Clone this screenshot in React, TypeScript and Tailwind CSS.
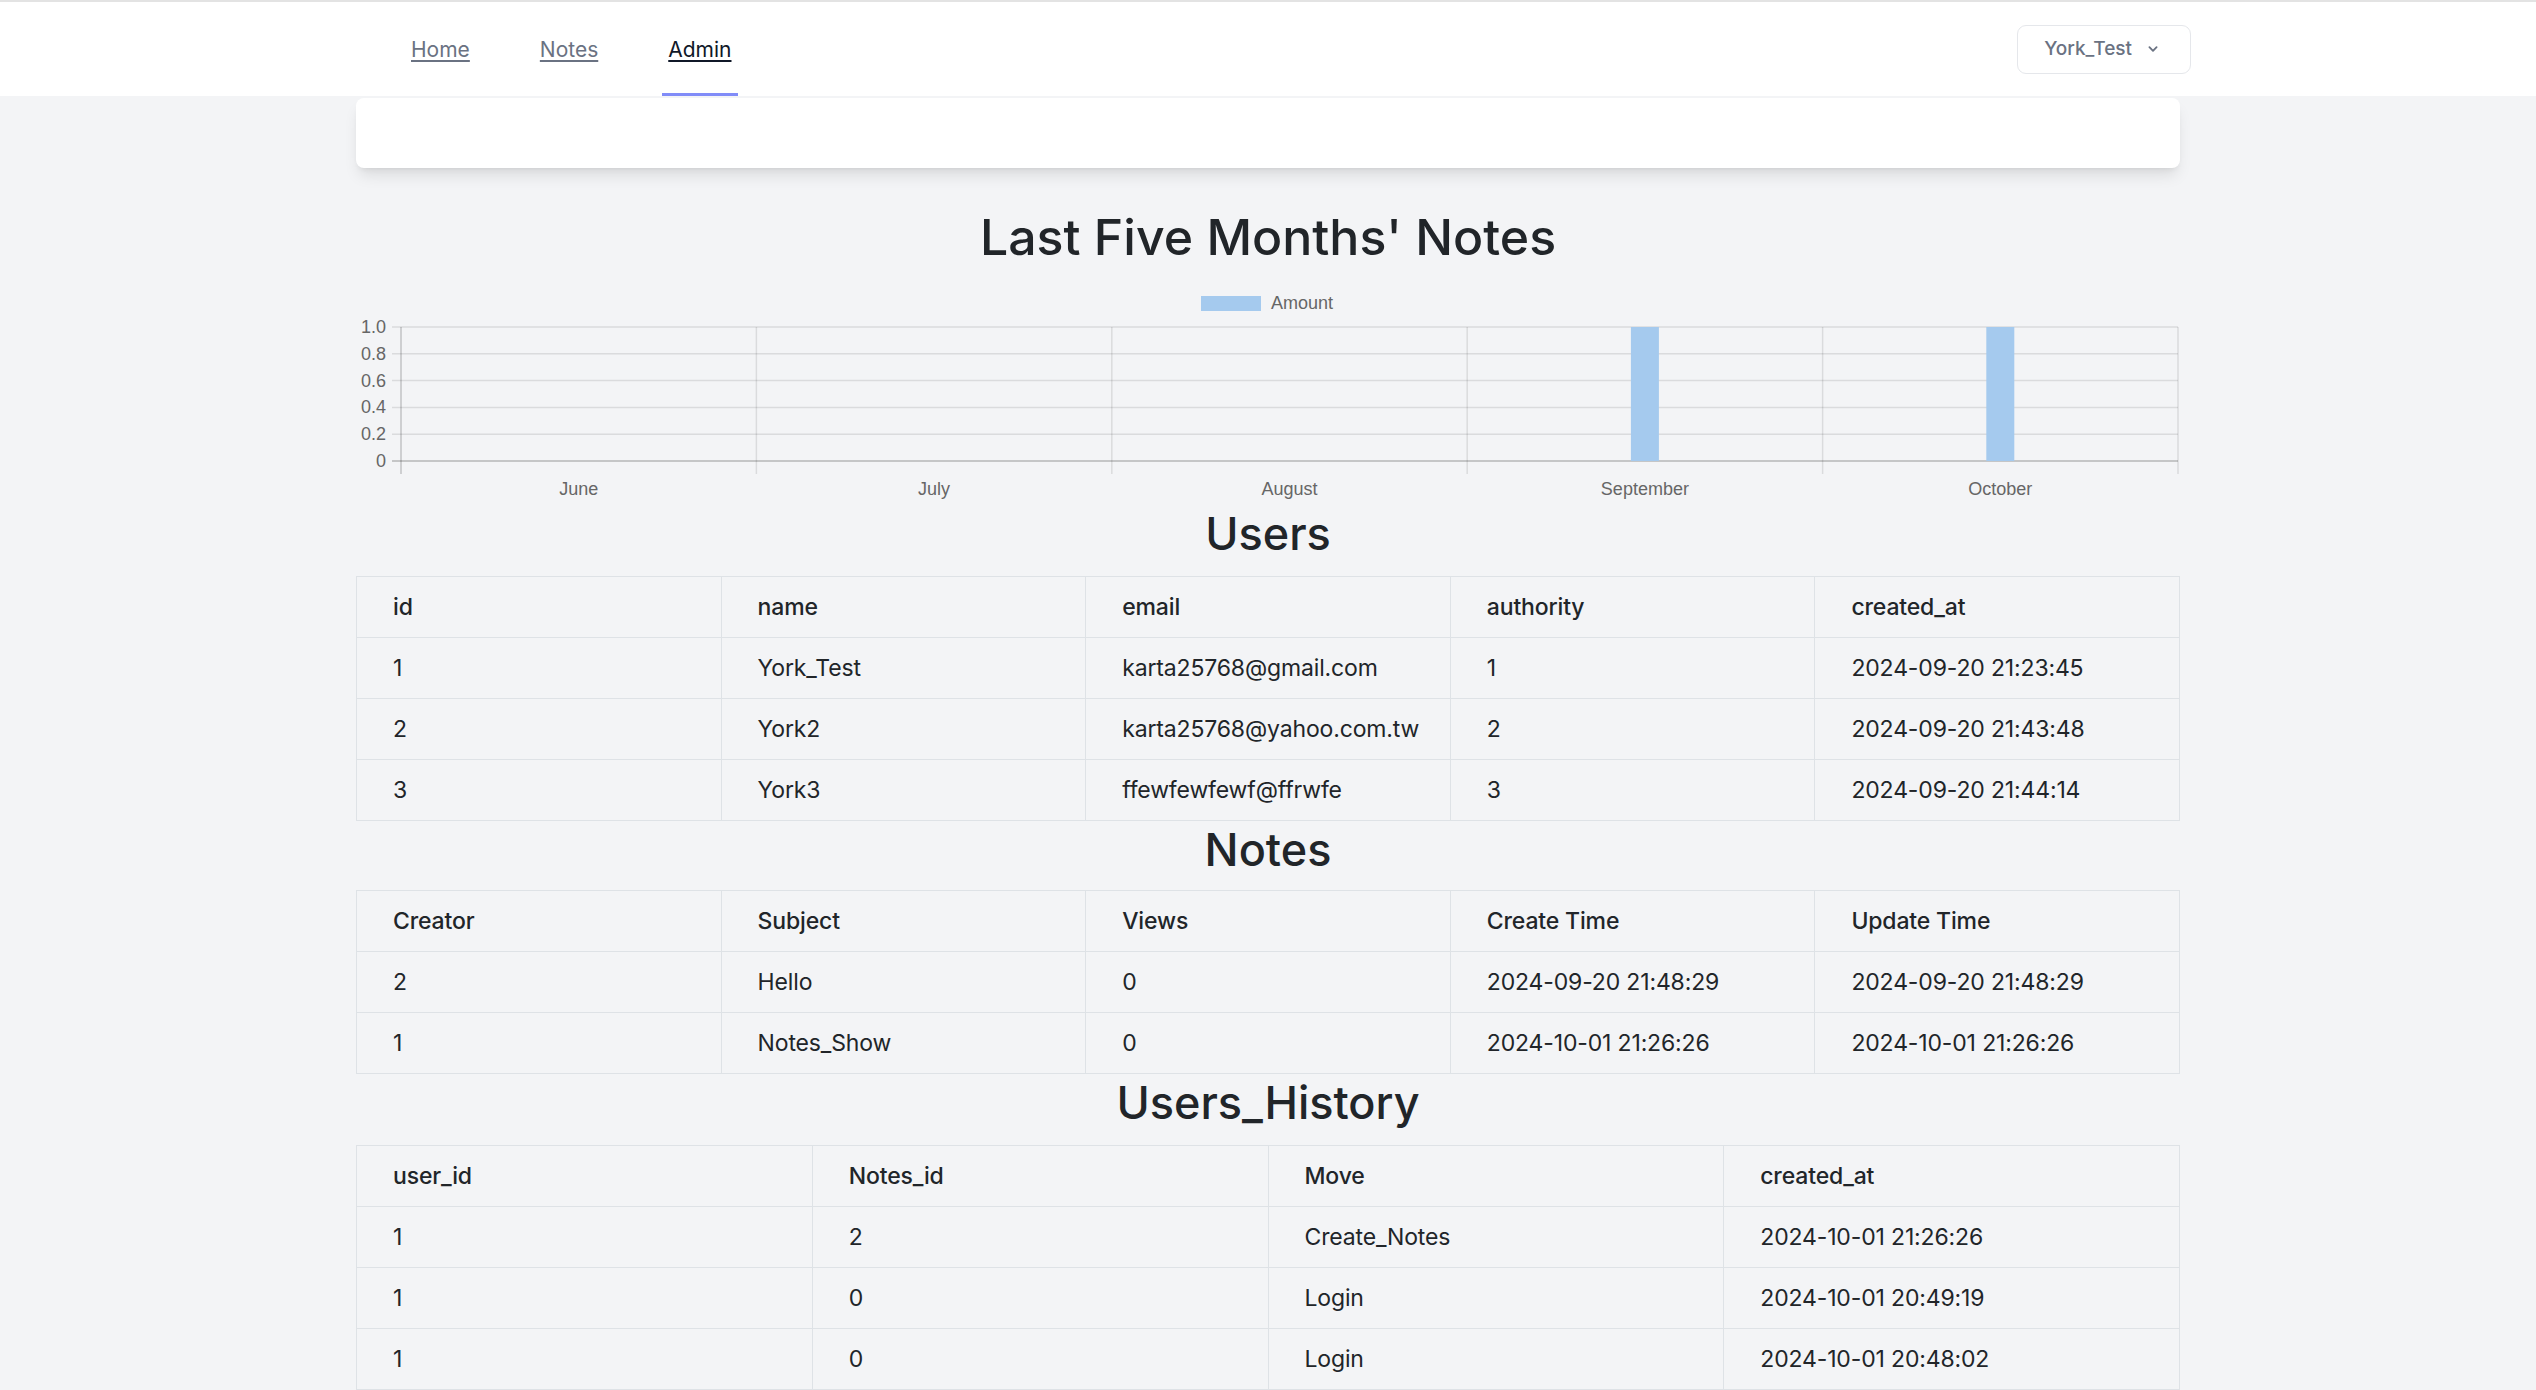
import React from "react";

const FONT = { fontFamily: "Inter, 'Noto Sans', sans-serif" };

const users = [
  ["1", "York_Test", "karta25768@gmail.com", "1", "2024-09-20 21:23:45"],
  ["2", "York2", "karta25768@yahoo.com.tw", "2", "2024-09-20 21:43:48"],
  ["3", "York3", "ffewfewfewf@ffrwfe", "3", "2024-09-20 21:44:14"],
];

const notes = [
  ["2", "Hello", "0", "2024-09-20 21:48:29", "2024-09-20 21:48:29"],
  ["1", "Notes_Show", "0", "2024-10-01 21:26:26", "2024-10-01 21:26:26"],
];

const history = [
  ["1", "2", "Create_Notes", "2024-10-01 21:26:26"],
  ["1", "0", "Login", "2024-10-01 20:49:19"],
  ["1", "0", "Login", "2024-10-01 20:48:02"],
];

function DataTable({ head, rows }: { head: string[]; rows: string[][] }) {
  return (
    <table className="w-full table-fixed border-collapse border border-[#dee2e6] text-[23px] tracking-[-0.15px] text-[#212529]">
      <thead>
        <tr>
          {head.map(h => (
            <th key={h} className="h-[61px] border border-[#dee2e6] px-[36px] text-left font-medium">
              {h}
            </th>
          ))}
        </tr>
      </thead>
      <tbody>
        {rows.map((r, i) => (
          <tr key={i}>
            {r.map((c, j) => (
              <td key={j} className="h-[61px] border border-[#dee2e6] px-[36px] font-normal">
                {c}
              </td>
            ))}
          </tr>
        ))}
      </tbody>
    </table>
  );
}

function Heading({ children }: { children: React.ReactNode }) {
  return <h2 className="text-center text-[45px] leading-[58px] font-medium text-[#212529]">{children}</h2>;
}

function Chart() {
  const left = 45;
  const step = 355.4;
  const months = ["June", "July", "August", "September", "October"];
  const ticks = ["1.0", "0.8", "0.6", "0.4", "0.2", "0"];
  const top = 39;
  const gap = 26.8;
  return (
    <svg width="1824" height="217" className="block" style={{ fontFamily: "'Liberation Sans', Arial, sans-serif" }}>
      <rect x="845" y="8" width="60" height="15" fill="#a5caee" />
      <text x="915" y="21" fontSize="18" fill="#666">Amount</text>
      {ticks.map((t, k) => {
        const y = top + k * gap;
        return (
          <g key={t}>
            <line x1="36" x2="1822" y1={y} y2={y} stroke={k === 5 ? "rgba(0,0,0,0.25)" : "rgba(0,0,0,0.1)"} strokeWidth="1.5" />
            <text x="30" y={y + 6} fontSize="18" fill="#666" textAnchor="end">{t}</text>
          </g>
        );
      })}
      {[0, 1, 2, 3, 4, 5].map(i => (
        <line
          key={i}
          x1={left + i * step}
          x2={left + i * step}
          y1={top}
          y2={186}
          stroke={i === 0 ? "rgba(0,0,0,0.2)" : "rgba(0,0,0,0.1)"}
          strokeWidth="1.5"
        />
      ))}
      <rect x={left + 3.5 * step - 14} y={top} width="28" height={5 * gap} fill="#a5caee" />
      <rect x={left + 4.5 * step - 14} y={top} width="28" height={5 * gap} fill="#a5caee" />
      {months.map((m, i) => (
        <text key={m} x={left + (i + 0.5) * step} y="207" fontSize="18" fill="#666" textAnchor="middle">
          {m}
        </text>
      ))}
    </svg>
  );
}

export default function App() {
  return (
    <div className="min-h-screen bg-[#f3f4f6]" style={FONT}>
      <nav className="h-[97px] border-t-2 border-b border-t-[#e3e3e3] border-b-gray-100 bg-white">
        <div className="mx-auto flex h-full w-[1824px] items-center justify-between">
          <div className="ml-[49px] flex h-full gap-[58px]">
            <a className="flex h-full items-center px-[6px] pt-[2px] text-[21px] text-gray-500 underline underline-offset-[3px]">Home</a>
            <a className="flex h-full items-center px-[6px] pt-[2px] text-[21px] text-gray-500 underline underline-offset-[3px]">Notes</a>
            <a className="flex h-full items-center border-b-[3px] border-[#818cf8] px-[6px] pt-[5px] text-[21px] text-gray-900 underline underline-offset-[3px]">
              Admin
            </a>
          </div>
          <button className="mr-[-11px] flex h-[49px] items-center gap-[12px] rounded-[9px] border border-gray-200 bg-white pl-[26px] pr-[28px] text-[19px] font-medium text-gray-500">
            York_Test
            <svg width="18" height="18" viewBox="0 0 20 20" fill="currentColor">
              <path
                fillRule="evenodd"
                d="M5.293 7.293a1 1 0 011.414 0L10 10.586l3.293-3.293a1 1 0 111.414 1.414l-4 4a1 1 0 01-1.414 0l-4-4a1 1 0 010-1.414z"
                clipRule="evenodd"
              />
            </svg>
          </button>
        </div>
      </nav>

      <main className="mx-auto w-[1824px] pb-10">
        <div className="mt-[1px] h-[70px] rounded-lg bg-white shadow-lg" />

        <h1 className="mt-[37px] text-center text-[50px] leading-[64px] font-medium text-[#212529]">Last Five Months' Notes</h1>

        <div className="mt-[19px]">
          <Chart />
        </div>

        <Heading>Users</Heading>
        <div className="mt-[13px]">
          <DataTable head={["id", "name", "email", "authority", "created_at"]} rows={users} />
        </div>

        <Heading>Notes</Heading>
        <div className="mt-[11px]">
          <DataTable head={["Creator", "Subject", "Views", "Create Time", "Update Time"]} rows={notes} />
        </div>

        <Heading>Users_History</Heading>
        <div className="mt-[13px]">
          <DataTable head={["user_id", "Notes_id", "Move", "created_at"]} rows={history} />
        </div>
      </main>
    </div>
  );
}
